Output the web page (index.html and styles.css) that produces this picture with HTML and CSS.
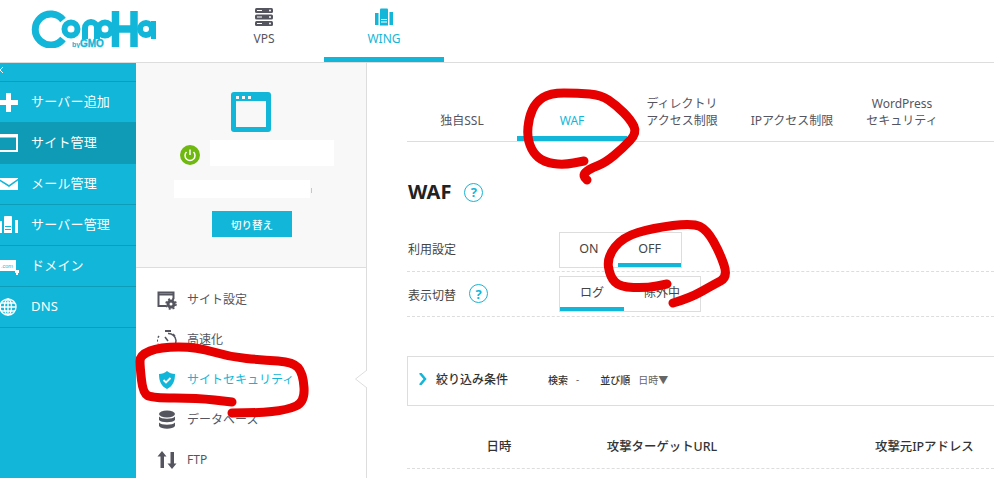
FILE: index.html
```html
<!DOCTYPE html>
<html lang="ja">
<head>
    <meta charset="UTF-8">
    <meta name="viewport" content="width=device-width, initial-scale=1.0">
    <title>ConoHa WING</title>
    <link rel="stylesheet" href="styles.css">
</head>
<body>
    <!-- ヘッダー -->
    <header class="header">
        <svg class="logo" width="125" height="38" viewBox="0 0 125 38">
            <g fill="none" stroke="#12b6d8">
                <path d="M32 10A15.500 15.500 0 1 0 32 29" stroke-width="7"/>
                <circle cx="40" cy="19" r="6.500" stroke-width="6"/>
                <path d="M54 29V18a6 6 0 0 1 12 0V29" stroke-width="6"/>
                <circle cx="74" cy="19" r="6.500" stroke-width="6"/>
                <path d="M84.500 1V37M103 1V37M84 19H103" stroke-width="7.500"/>
                <circle cx="115" cy="19" r="6" stroke-width="6"/>
                <path d="M122.500 11V29" stroke-width="5"/>
            </g>
            <text x="41" y="37" class="logo-by">by</text>
            <text x="49" y="37" class="logo-gmo">GMO</text>
        </svg>
        <nav class="top-nav">
            <a class="top-item">
                <svg width="18" height="18" viewBox="0 0 18 18" fill="#555560">
                    <rect y="0" width="18" height="5" rx="1.500"/>
                    <rect y="6.500" width="18" height="5" rx="1.500"/>
                    <rect y="13" width="18" height="5" rx="1.500"/>
                    <path d="M2 2h5v1H2zM2 8.500h5v1H2zM2 15h5v1H2z" fill="#fff"/>
                    <circle cx="15" cy="2.500" r="1" fill="#fff"/>
                    <circle cx="15" cy="9" r="1" fill="#fff"/>
                    <circle cx="15" cy="15.500" r="1" fill="#fff"/>
                </svg>
                <span>VPS</span>
            </a>
            <a class="top-item top-item-active">
                <svg width="18" height="18" viewBox="0 0 18 18" fill="#12b6d8">
                    <path d="M0 5h3.500v12H0zM14.500 4h3.500v13h-3.500z"/>
                    <path d="M5 1.500q0-1 1-1h6q1 0 1 1V17.500H5z"/>
                    <path d="M6 11h6v1H6zM6 13.500h6v1H6z" fill="#fff"/>
                </svg>
                <span>WING</span>
            </a>
        </nav>
    </header>

    <div class="layout">
        <!-- サイドバー -->
        <aside class="sidebar">
            <div class="sidebar-top">
                <svg width="4" height="8" viewBox="0 0 4 8"><path d="M3 1L0 4l3 3" fill="none" stroke="#fff"/></svg>
            </div>
            <a class="side-item">
                <svg width="18" height="18" viewBox="0 0 18 18" fill="#fff"><path d="M-1 7h7V0h5v7h7v5h-7v7H6v-7H-1z"/></svg>
                <span>サーバー追加</span>
            </a>
            <a class="side-item side-item-active">
                <svg width="18" height="18" viewBox="0 0 18 18" fill="none" stroke="#fff"><rect x="-1" y="1" width="18" height="16" stroke-width="2"/><path d="M0 2.500h17" stroke-width="2"/></svg>
                <span>サイト管理</span>
            </a>
            <a class="side-item">
                <svg width="18" height="18" viewBox="0 0 18 18" fill="#fff"><path d="M-1 3h19v.800L9 10-1 3.800zM-1 5.500l10 6.500 9-6.500V15H-1z"/></svg>
                <span>メール管理</span>
            </a>
            <a class="side-item">
                <svg width="18" height="18" viewBox="0 0 18 18" fill="#fff"><path d="M-1 5h3v12h-3zM15 4h3v13h-3z"/><path d="M4 1q0-1 1-1h6q1 0 1 1v16H4z"/><path d="M5 10h6v1H5zM5 13h6v1H5z" fill="#12b6d8"/></svg>
                <span>サーバー管理</span>
            </a>
            <a class="side-item">
                <svg width="21" height="18" viewBox="0 0 21 18"><rect x="-1" y="3" width="17" height="11" fill="#fff"/><text x="1" y="11" class="com-text">.com</text><path d="M15 13h4v3h-1v2h-2v-2h-1z" fill="#fff"/></svg>
                <span class="side-label-domain">ドメイン</span>
            </a>
            <a class="side-item">
                <svg width="18" height="18" viewBox="0 0 18 18" fill="none" stroke="#fff" stroke-width="1.400"><circle cx="8" cy="9" r="8"/><ellipse cx="8" cy="9" rx="3.500" ry="8"/><path d="M0 9h16M1 5h14M1 13h14M8 1v16"/></svg>
                <span class="side-label-dns">DNS</span>
            </a>
        </aside>

        <!-- サイト選択パネル -->
        <section class="panel">
            <div class="panel-top">
                <svg class="site-icon" width="40" height="40" viewBox="0 0 40 40">
                    <rect width="40" height="40" rx="3" fill="#12b6d8"/>
                    <rect x="5" y="9" width="30" height="26" fill="#f8f8f8"/>
                    <path d="M5 4h3v3H5zM11 4h3v3h-3zM17 4h3v3h-3z" fill="#f8f8f8"/>
                </svg>
                <div class="site-row">
                    <svg class="power-icon" width="20" height="20" viewBox="0 0 20 20">
                        <circle cx="10" cy="10" r="10" fill="#6fb80f"/>
                        <path d="M6.500 7a5 5 0 1 0 7 0" fill="none" stroke="#fff" stroke-width="1.500"/>
                        <path d="M10 4.500v5.500" stroke="#fff" stroke-width="1.500"/>
                    </svg>
                    <div class="site-name"></div>
                </div>
                <div class="site-domain"></div>
                <button class="switch-btn">切り替え</button>
            </div>
            <ul class="panel-menu">
                <li class="menu-item">
                    <svg width="20" height="20" viewBox="0 0 20 20" fill="none" stroke="#555560"><path d="M9 16H1.500V2.500h15V9" stroke-width="2"/><path d="M2 4.500h14" stroke-width="2"/><circle cx="14" cy="14" r="3" stroke-width="3"/><circle cx="14" cy="14" r="5" stroke-width="1.500" stroke-dasharray="2 2"/></svg>
                    <span>サイト設定</span>
                </li>
                <li class="menu-item">
                    <svg width="20" height="20" viewBox="0 0 20 20" fill="none" stroke="#555560"><path d="M11 3.500a7.500 7.500 0 0 1 1 15H7" stroke-width="1.500"/><path d="M2 6a7.500 7.500 0 0 0-1 8" stroke-width="1.500" stroke-dasharray="2 2"/><path d="M8 1h6" stroke-width="2"/><path d="M11 11l-3-4" stroke-width="1.500"/><path d="M16 4l2 2" stroke-width="1.500"/></svg>
                    <span>高速化</span>
                </li>
                <li class="menu-item menu-item-active">
                    <svg width="20" height="20" viewBox="0 0 20 20"><path d="M10 1c2 2 5 3 8 3 0 7-2 12-8 15C4 16 2 11 2 4c3 0 6-1 8-3z" fill="#12b6d8"/><path d="M6.500 10l2.500 2.500 4.500-4.500" fill="none" stroke="#fff" stroke-width="1.800"/></svg>
                    <span>サイトセキュリティ</span>
                </li>
                <li class="menu-item">
                    <svg width="20" height="20" viewBox="0 0 20 20" fill="#555560"><ellipse cx="10" cy="4" rx="8" ry="3.500"/><path d="M2 6.500c2 3 14 3 16 0v3.500c-2 3-14 3-16 0zM2 12.500c2 3 14 3 16 0V16c-2 3.500-14 3.500-16 0z"/></svg>
                    <span>データベース</span>
                </li>
                <li class="menu-item">
                    <svg width="20" height="20" viewBox="0 0 20 20" fill="#555560"><path d="M5 1l4.500 5.500H7V18H3.500V6.500H.5zM15 19l4.500-5.500H17V2h-3.500v11.500H10.500z"/></svg>
                    <span>FTP</span>
                </li>
            </ul>
            <svg class="panel-caret" width="12" height="18" viewBox="0 0 12 18"><path d="M12 0L.5 9 12 18z" fill="#fff"/><path d="M12 0L.5 9 12 18" fill="none" stroke="#ddd"/></svg>
        </section>

        <!-- メイン -->
        <main class="main">
            <div class="tabs">
                <a class="tab">独自SSL</a>
                <a class="tab tab-active">WAF</a>
                <a class="tab">ディレクトリ<br>アクセス制限</a>
                <a class="tab">IPアクセス制限</a>
                <a class="tab">WordPress<br>セキュリティ</a>
            </div>

            <h2 class="title">WAF <span class="help help-title">?</span></h2>

            <div class="setting-row">
                <div class="setting-label setting-label-first">利用設定</div>
                <div class="toggle">
                    <span class="toggle-item toggle-on">ON</span>
                    <span class="toggle-item toggle-off toggle-active">OFF</span>
                </div>
            </div>
            <div class="setting-row setting-row-second">
                <div class="setting-label"><span class="label-text">表示切替</span> <span class="help help-label">?</span></div>
                <div class="toggle">
                    <span class="toggle-item toggle-log toggle-active">ログ</span>
                    <span class="toggle-item toggle-ex">除外中</span>
                </div>
            </div>

            <div class="filter">
                <svg width="8" height="12" viewBox="0 0 8 12"><path d="M1 0l5 6-5 6" fill="none" stroke="#12b6d8" stroke-width="2.500"/></svg>
                <span class="filter-title">絞り込み条件</span>
                <span class="filter-key">検索</span>
                <span class="filter-val filter-dash">-</span>
                <span class="filter-key">並び順</span>
                <span class="filter-val">日時▼</span>
            </div>

            <div class="table-head">
                <div class="col-date">日時</div>
                <div class="col-url">攻撃ターゲットURL</div>
                <div class="col-ip">攻撃元IPアドレス</div>
            </div>
        </main>
    </div>

    <!-- 赤い手書きの囲み -->
    <svg class="scribble" width="994" height="478" viewBox="0 0 994 478">
        <path d="M584 161L573.500 163Q563 165 553.500 163.500Q544 162 538.500 157.500Q533 153 530 145Q527 137 528 127Q529 117 532.500 109.500Q536 102 543 97.500Q550 93 564 93Q578 93 589.500 94Q601 95 608.500 100Q616 105 623.500 112.500Q631 120 634 126.500Q637 133 630 140.500Q623 148 614 155.500Q605 163 597 166Q589 169 585.500 172.500Q582 176 587 180"/>
        <path d="M667 284L657 286Q647 288 633.500 287.500Q620 287 615 282Q610 277 608.500 267Q607 257 615 247Q623 237 638 232.500Q653 228 673 225.500Q693 223 700 226.500Q707 230 713.500 241.500Q720 253 724 265Q728 277 720.500 281Q713 285 701.500 291.500Q690 298 673 303"/>
        <path d="M232 402L214.500 400Q197 398 174.500 398Q152 398 147.500 395.500Q143 393 141.500 380Q140 367 140 361Q140 355 150 351Q160 347 178.500 347Q197 347 213.500 352Q230 357 246.500 358.500Q263 360 278 361Q293 362 298 367.500Q303 373 304 387.500Q305 402 296 406Q287 410 272 411.500Q257 413 232 413"/>
    </svg>
</body>
</html>
```

FILE: styles.css
```css
* {
    box-sizing: border-box;
}
html, body {
    height: 100%;
    margin: 0;
}
body {
    position: relative;
    overflow: hidden;
    font-family: "Noto Sans", "Noto Sans CJK JP", sans-serif;
    font-size: 12px;
    color: #555560;
    background: #fff;
}
.header {
    display: flex;
    height: 63px;
    border-bottom: 1px solid #ddd;
}
.logo {
    margin: 10px 0 0 31px;
    flex-shrink: 0;
}
.logo-by {
    font: bold 7px "Liberation Sans", sans-serif;
    fill: #12b6d8;
}
.logo-gmo {
    font: bold 10px "Liberation Sans", sans-serif;
    fill: #12b6d8;
    stroke: #12b6d8;
    stroke-width: 0.3px;
}
.top-nav {
    display: flex;
    margin-left: 48px;
}
.top-item {
    width: 120px;
    height: 62px;
    display: flex;
    flex-direction: column;
    align-items: center;
    padding-top: 8px;
    gap: 4px;
}
.top-item-active {
    color: #12b6d8;
    border-bottom: 5px solid #12b6d8;
}
.layout {
    display: flex;
    height: 415px;
}
.sidebar {
    width: 136px;
    background: #12b6d8;
    color: #fff;
    font-size: 13px;
    flex-shrink: 0;
}
.sidebar-top {
    height: 19px;
    padding-top: 3px;
    border-bottom: 1px solid #0e9db9;
}
.sidebar-top svg {
    display: block;
}
.side-item {
    display: flex;
    align-items: center;
    height: 41px;
    padding-right: 4px;
    gap: 13px;
    border-bottom: 1px solid #0e9db9;
}
.side-item svg {
    flex-shrink: 0;
    overflow: visible;
}
.side-item span {
    padding-bottom: 4px;
    letter-spacing: 0.2px;
}
.side-item .side-label-dns {
    padding-bottom: 2px;
}
.side-item-active {
    background: #0f9bb6;
}
.side-label-domain {
    margin-left: -3px;
}
.com-text {
    font: italic 5.5px "Liberation Sans", sans-serif;
    fill: #12b6d8;
}
.panel {
    position: relative;
    width: 231px;
    border-right: 1px solid #ddd;
    flex-shrink: 0;
}
.panel-top {
    height: 205px;
    padding-top: 29px;
    background: #f8f8f8;
    border-bottom: 1px solid #ddd;
    display: flex;
    flex-direction: column;
    align-items: center;
}
.site-icon {
    display: block;
}
.site-row {
    display: flex;
    align-items: center;
    gap: 10px;
    margin: 8px 0 0 12px;
}
.power-icon {
    margin-top: 4px;
}
.site-name {
    width: 124px;
    height: 26px;
    background: #fff;
}
.site-domain {
    position: relative;
    width: 136px;
    height: 18px;
    margin: 14px 0 0 -18px;
    background: #fff;
}
.site-domain::after {
    content: "";
    position: absolute;
    left: 137px;
    top: 8px;
    width: 1px;
    height: 5px;
    background: #8fdcec;
}
.switch-btn {
    width: 80px;
    height: 26px;
    margin: 13px 0 0 2px;
    border: none;
    padding: 0;
    background: #12b6d8;
    color: #fff;
    font-family: inherit;
    font-size: 10.5px;
    font-weight: 500;
}
.panel-menu {
    list-style: none;
    margin: 0;
    padding: 12px 0 0 21px;
}
.menu-item {
    display: flex;
    align-items: center;
    height: 40px;
    gap: 10px;
}
.menu-item span {
    padding-bottom: 2px;
}
.menu-item-active {
    color: #12b6d8;
}
.panel-caret {
    position: absolute;
    right: -1px;
    top: 307px;
}
.main {
    flex: 1;
    padding-left: 40px;
    min-width: 0;
}
.tabs {
    display: flex;
    height: 79px;
    padding-top: 30px;
    border-bottom: 1px solid #ddd;
}
.tab {
    width: 110px;
    height: 48px;
    display: flex;
    align-items: flex-end;
    justify-content: center;
    text-align: center;
    line-height: 17px;
    padding-bottom: 12px;
}
.tab-active {
    color: #12b6d8;
    border-bottom: 5px solid #12b6d8;
    padding-bottom: 7px;
}
.title {
    margin: 37px 0 0 1px;
    font-size: 20px;
    line-height: 26px;
    color: #222;
    display: flex;
    align-items: center;
}
.help {
    display: inline-flex;
    align-items: center;
    justify-content: center;
    width: 19px;
    height: 19px;
    border: 1.5px solid #12b6d8;
    border-radius: 50%;
    color: #12b6d8;
    font-size: 13px;
    font-weight: 700;
}
.help-title {
    margin-left: 13px;
}
.help-label {
    margin-left: 13px;
}
.setting-row {
    display: flex;
    align-items: center;
    height: 40px;
    margin-top: 27px;
    padding-bottom: 3px;
    border-bottom: 1px dashed #ddd;
    color: #444;
}
.setting-row-second {
    height: 45px;
    margin-top: 0;
    padding-top: 3px;
    padding-bottom: 4px;
}
.setting-label {
    width: 152px;
    padding-left: 1px;
    display: flex;
    align-items: center;
}
.setting-label-first {
    padding-bottom: 2px;
}
.label-text {
    padding-top: 3px;
}
.toggle {
    display: flex;
    height: 36px;
    border: 1px solid #ddd;
}
.toggle-item {
    display: flex;
    align-items: center;
    justify-content: center;
    border-bottom: 4px solid transparent;
}
.toggle-off, .toggle-on {
    font-size: 12.5px;
}
.toggle-active {
    border-bottom-color: #12b6d8;
}
.toggle-on {
    width: 58px;
}
.toggle-off {
    width: 63px;
}
.toggle-log {
    width: 64px;
}
.toggle-ex {
    width: 76px;
}
.filter {
    display: flex;
    align-items: center;
    height: 50px;
    margin-top: 39px;
    padding: 0 0 4px 11px;
    border: 1px solid #ddd;
    border-right: none;
    color: #333;
    font-size: 10px;
}
.filter-title {
    margin: 0 40px 0 9px;
    font-size: 12px;
    font-weight: 500;
}
.filter-key {
    font-weight: 500;
}
.filter-val {
    color: #666;
    margin-left: 8px;
}
.filter-dash {
    margin-right: 21px;
}
.table-head {
    display: flex;
    align-items: center;
    height: 63px;
    padding-top: 18px;
    border-bottom: 1px dashed #ddd;
    font-size: 12.4px;
    font-weight: 500;
    color: #333;
}
.col-date {
    width: 184px;
    text-align: center;
}
.col-url {
    width: 134px;
    text-align: center;
    margin-left: 4px;
}
.col-ip {
    margin-left: 146px;
    white-space: nowrap;
}
.scribble {
    position: absolute;
    left: 0;
    top: 0;
    pointer-events: none;
}
.scribble path {
    fill: none;
    stroke: #e60000;
    stroke-width: 9;
    stroke-linecap: round;
    stroke-linejoin: round;
}
```
